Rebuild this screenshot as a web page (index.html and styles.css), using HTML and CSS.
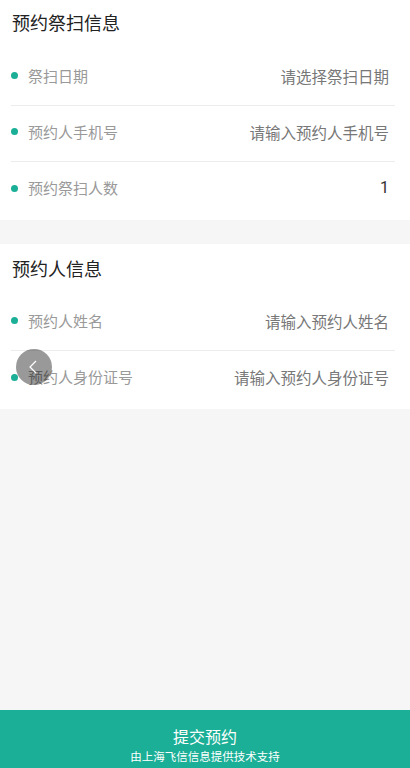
FILE: index.html
```html
<!DOCTYPE html>
<html lang="zh-CN">
<head>
    <meta charset="UTF-8">
    <meta name="viewport" content="width=device-width, initial-scale=1.0">
    <title>预约祭扫</title>
    <link rel="stylesheet" href="styles.css">
</head>
<body>
    <div class="section">
        <h2 class="section-title">预约祭扫信息</h2>
        <div class="row">
            <span class="dot"></span>
            <span class="label">祭扫日期</span>
            <span class="value">请选择祭扫日期</span>
        </div>
        <div class="row">
            <span class="dot"></span>
            <span class="label">预约人手机号</span>
            <span class="value">请输入预约人手机号</span>
        </div>
        <div class="row">
            <span class="dot"></span>
            <span class="label">预约祭扫人数</span>
            <span class="value filled">1</span>
        </div>
    </div>

    <div class="section">
        <h2 class="section-title">预约人信息</h2>
        <div class="row">
            <span class="dot"></span>
            <span class="label">预约人姓名</span>
            <span class="value">请输入预约人姓名</span>
        </div>
        <div class="row">
            <span class="dot"></span>
            <span class="label">预约人身份证号</span>
            <span class="value">请输入预约人身份证号</span>
        </div>
    </div>

    <!-- floating back button -->
    <div class="back-btn">
        <svg width="10" height="14" viewBox="0 0 10 14">
            <polyline points="8,1 2,7 8,13" fill="none" stroke="#fff" stroke-width="1.2"/>
        </svg>
    </div>

    <div class="submit-bar">
        <div class="submit-text">提交预约</div>
        <div class="support-text">由上海飞信信息提供技术支持</div>
    </div>
</body>
</html>
```

FILE: styles.css
```css
html, body { height: 100%; }
body {
    margin: 0;
    background-color: #f6f6f6;
    font-family: "Noto Sans CJK SC", "Noto Sans", sans-serif;
}
.section { background-color: #fff; padding-bottom: 2px; margin-bottom: 24px; }
.section-title {
    margin: 0;
    padding: 10px 12px 16px;
    font-size: 18px;
    line-height: 24px;
    font-weight: normal;
    color: #222;
}
.section + .section .section-title { padding-top: 12px; padding-bottom: 15px; }
.row {
    display: flex;
    align-items: center;
    height: 56px;
    box-sizing: border-box;
    padding: 16px 6px 20px 0;
    margin: 0 15px 0 11px;
    border-bottom: 1px solid #ececec;
    font-size: 15px;
    line-height: 20px;
}
.row:last-child { border-bottom: none; }
.dot {
    width: 7px;
    height: 7px;
    border-radius: 50%;
    background-color: #1aaf96;
    margin-right: 10px;
    flex-shrink: 0;
}
.label { flex: 1; color: #999; }
.value { color: #777; font-size: 15.5px; }
.value.filled { color: #333; font-family: Roboto, "Noto Sans CJK SC", sans-serif; font-size: 16px; }
.back-btn {
    position: fixed;
    left: 16px;
    top: 349px;
    width: 36px;
    height: 36px;
    border-radius: 50%;
    background-color: rgba(0, 0, 0, 0.4);
    display: flex;
    align-items: center;
    justify-content: center;
}
.back-btn svg { margin-left: -2px; }
.submit-bar {
    position: fixed;
    left: 0;
    right: 0;
    bottom: 0;
    height: 58px;
    background-color: #1aaf96;
    color: #fff;
    text-align: center;
    box-sizing: border-box;
    padding-top: 16px;
}
.submit-text { font-size: 16px; line-height: 20px; }
.support-text { font-size: 11.5px; line-height: 20px; }
```
